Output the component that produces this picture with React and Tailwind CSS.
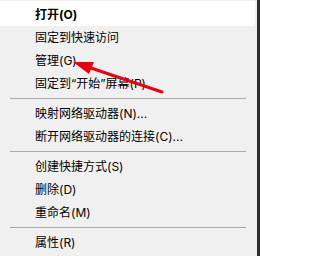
const groups = [
  [
    { label: '打开(O)', bold: true, active: true },
    { label: '固定到快速访问' },
    { label: '管理(G)' },
    { label: '固定到“开始”屏幕(P)' },
  ],
  [{ label: '映射网络驱动器(N)...' }, { label: '断开网络驱动器的连接(C)...' }],
  [{ label: '创建快捷方式(S)' }, { label: '删除(D)' }, { label: '重命名(M)' }],
  [{ label: '属性(R)' }],
]

function MenuItem({ item, first }) {
  return (
    <div
      className={`flex items-center pl-[35px] text-[12px] text-black ${
        first ? 'h-[25px] pt-[2px]' : 'h-[23px]'
      } ${item.active ? 'bg-white mr-[2px]' : ''} ${item.bold ? 'font-bold' : ''}`}
    >
      {item.label}
    </div>
  )
}

function Separator() {
  return (
    <div className="h-[7px] flex items-center pl-[10px] pr-[11px]">
      <div className="h-px w-full bg-[#a9a9a9]" />
    </div>
  )
}

export default function App() {
  return (
    <div
      className="relative w-[260px] h-[256px] flex bg-[#f0f0f0] overflow-hidden"
      style={{ fontFamily: "Inter, 'Noto Sans CJK SC', sans-serif" }}
    >
      <div className="flex-1 flex flex-col pt-[1px] whitespace-nowrap">
        {groups.map((group, gi) => (
          <div key={gi}>
            {gi > 0 && <Separator />}
            {group.map((item, i) => (
              <MenuItem key={item.label} item={item} first={gi === 0 && i === 0} />
            ))}
          </div>
        ))}
      </div>
      <div className="w-[3px] bg-[#2b2b2b]" />

      {/* red annotation arrow */}
      <svg className="absolute left-0 top-0" width="260" height="256">
        <line x1="162" y1="92" x2="88" y2="67" stroke="#e60012" strokeWidth="3" strokeLinecap="round" />
        <polygon points="73,62 94,62 89,74" fill="#e60012" />
      </svg>
    </div>
  )
}
